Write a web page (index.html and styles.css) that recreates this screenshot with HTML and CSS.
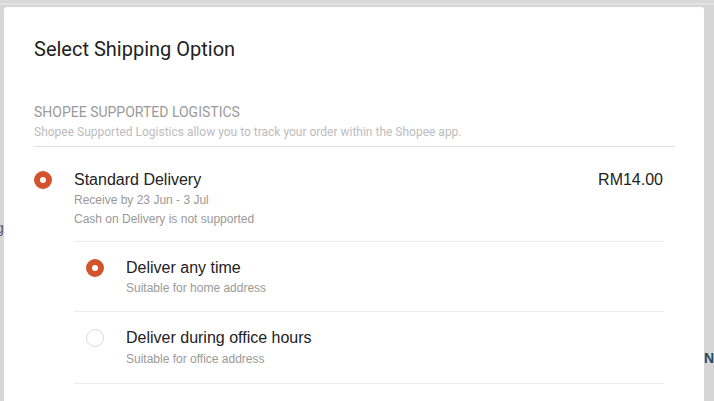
FILE: index.html
```html
<!DOCTYPE html>
<html lang="en">
<head>
    <meta charset="UTF-8">
    <meta name="viewport" content="width=device-width, initial-scale=1.0">
    <title>Select Shipping Option</title>
    <link rel="stylesheet" href="styles.css">
</head>
<body>
    <div class="backdrop">
        <span class="peek peek-left">g</span>
        <span class="peek peek-right">N</span>
    </div>
    <div class="modal">
        <h2 class="modal-title">Select Shipping Option</h2>

        <div class="section">
            <div class="section-head">
                <div class="section-name">Shopee Supported Logistics</div>
                <div class="section-desc">Shopee Supported Logistics allow you to track your order within the Shopee app.</div>
            </div>

            <div class="option">
                <span class="radio checked"></span>
                <div class="option-body">
                    <div class="option-row">
                        <div class="option-title">Standard Delivery</div>
                        <div class="option-price">RM14.00</div>
                    </div>
                    <div class="option-note">Receive by 23 Jun - 3 Jul</div>
                    <div class="option-note">Cash on Delivery is not supported</div>

                    <div class="sub-list">
                        <div class="sub-option">
                            <span class="radio checked"></span>
                            <div>
                                <div class="option-title">Deliver any time</div>
                                <div class="option-note">Suitable for home address</div>
                            </div>
                        </div>
                        <div class="sub-option">
                            <span class="radio"></span>
                            <div>
                                <div class="option-title">Deliver during office hours</div>
                                <div class="option-note">Suitable for office address</div>
                            </div>
                        </div>
                    </div>
                </div>
            </div>

            <div class="option">
                <span class="radio"></span>
                <div class="option-body">
                    <div class="option-row">
                        <div class="option-title">Economy Delivery</div>
                        <div class="option-price">RM10.00</div>
                    </div>
                </div>
            </div>
        </div>
    </div>
</body>
</html>
```

FILE: styles.css
```css
body {
    margin: 0;
    padding: 0;
    background-color: #d7d7d7;
    font-family: Roboto, 'Liberation Sans', sans-serif;
    height: 401px;
    overflow: hidden;
    position: relative;
}
.backdrop {
    position: absolute;
    inset: 0;
    background: linear-gradient(#d9d9d9 0, #d9d9d9 3px, #e2e2e2 3px, #e2e2e2 5px, #d6d6d6 5px);
}
.peek {
    position: absolute;
    font-family: 'Liberation Sans', sans-serif;
    font-size: 14px;
}
.peek-left {
    left: -4px;
    top: 220px;
    color: #555;
}
.peek-right {
    left: 704px;
    top: 350px;
    color: #2e4a55;
    font-weight: bold;
}
.modal {
    position: relative;
    margin: 7px 0 0 4px;
    width: 700px;
    height: 420px;
    background-color: #fff;
    border-radius: 3px 3px 0 0;
    box-sizing: border-box;
    padding: 30px 29px 0 30px;
}
.modal-title {
    margin: 0;
    font-size: 20px;
    font-weight: 400;
    color: #222;
    line-height: 24px;
}
.section {
    margin-top: 43px;
}
.section-head {
    border-bottom: 1px solid #e2e2e2;
    padding-bottom: 6px;
}
.section-name {
    font-size: 14px;
    color: #9a9a9a;
    text-transform: uppercase;
    line-height: 17px;
}
.section-desc {
    font-size: 12px;
    color: #bcbcbc;
    line-height: 16px;
    margin-top: 3px;
}
.option {
    display: flex;
    padding-top: 24px;
}
.radio {
    flex: none;
    width: 18px;
    height: 18px;
    border-radius: 50%;
    box-sizing: border-box;
    border: 1px solid #dadada;
    background-color: #fff;
}
.radio.checked {
    border: 6px solid #d2532c;
}
.option-body {
    flex: 1;
    margin-left: 22px;
    padding-right: 12px;
}
.option-row {
    display: flex;
    justify-content: space-between;
}
.option-title,
.option-price {
    font-family: 'Liberation Sans', sans-serif;
    font-size: 16px;
    color: #222;
    line-height: 18px;
}
.option-note {
    font-family: 'Liberation Sans', sans-serif;
    font-size: 12px;
    color: #999;
    line-height: 19px;
}
.option-row + .option-note {
    margin-top: 2px;
}
.sub-list {
    margin-top: 12px;
    border-top: 1px solid #ebebeb;
}
.sub-option {
    display: flex;
    gap: 22px;
    padding: 17px 0 13px 12px;
    border-bottom: 1px solid #ebebeb;
}
.sub-option + .sub-option {
    padding-bottom: 14px;
}
.sub-option .option-note {
    margin-top: 2px;
}
.sub-option + .sub-option .option-note {
    margin-top: 3px;
}
```
